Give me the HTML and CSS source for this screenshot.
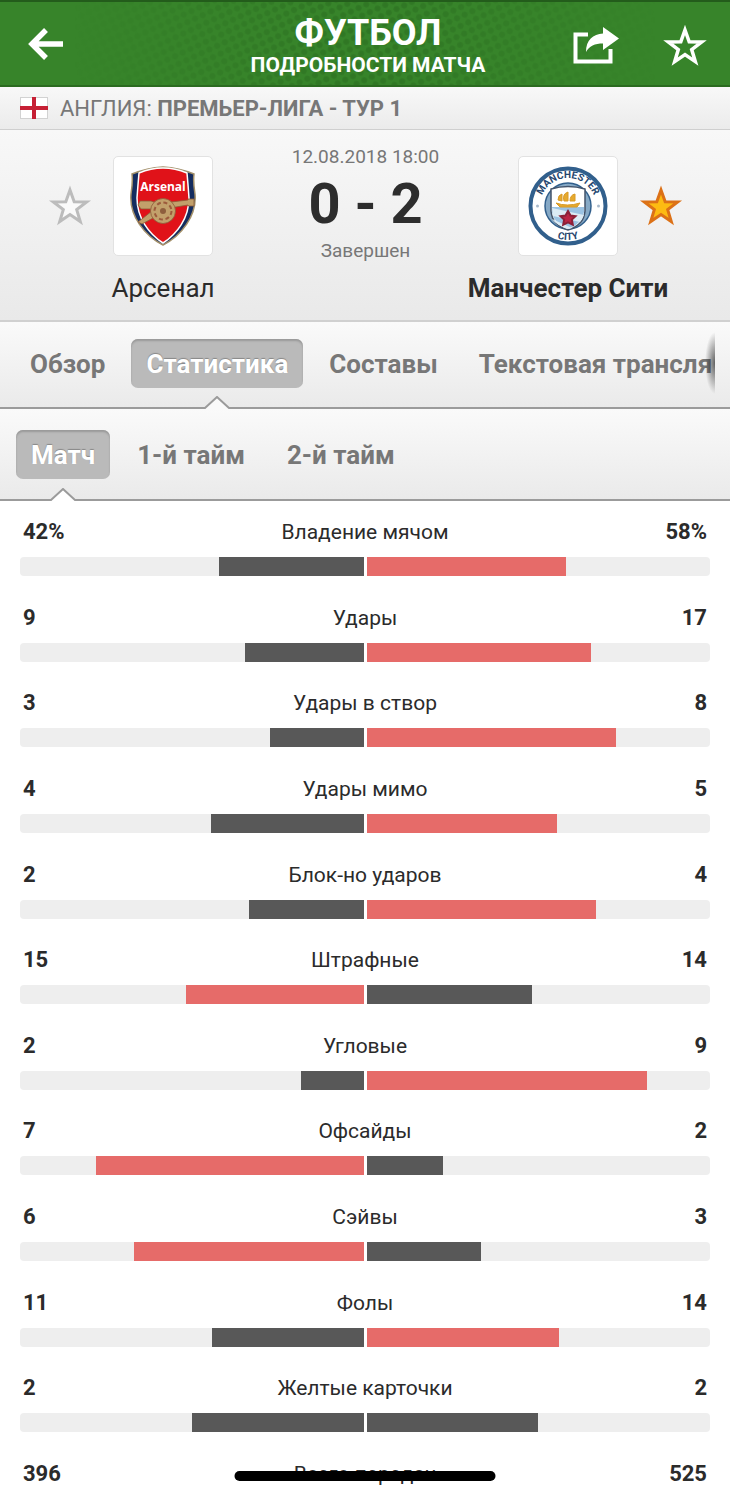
FILE: index.html
```
<!DOCTYPE html>
<html lang="ru">
<head>
    <meta charset="UTF-8">
    <meta name="viewport" content="width=device-width, initial-scale=1.0">
    <title>Футбол - Подробности матча</title>
    <link rel="stylesheet" href="styles.css">
</head>
<body>
    <header class="header">
        <svg class="header-pattern" aria-hidden="true">
            <defs>
                <pattern id="dots" width="12" height="12" patternUnits="userSpaceOnUse" patternTransform="rotate(20)">
                    <circle cx="3" cy="3" r="3"/>
                    <circle cx="9" cy="9" r="3"/>
                </pattern>
            </defs>
            <rect width="100%" height="100%" fill="url(#dots)"/>
        </svg>
        <div class="header-side">
            <button class="icon-button" aria-label="Назад">
                <svg width="36" height="34" viewBox="0 0 36 34"><path d="M35 17H6M18 3L4 17l14 14" fill="none" stroke="#fff" stroke-width="5.5"/></svg>
            </button>
        </div>
        <div class="header-title">
            <h1>ФУТБОЛ</h1>
            <p>ПОДРОБНОСТИ МАТЧА</p>
        </div>
        <div class="header-side header-actions">
            <button class="icon-button" aria-label="Поделиться">
                <svg width="46" height="38" viewBox="0 0 46 38">
                    <path d="M15 7.500H2.500V34.500H37.500V22" fill="none" stroke="#fff" stroke-width="4"/>
                    <path d="M30 0L46 11.500 30 23V16.500C22 16.500 16 19 13 25 13 13 20 7 30 6.500Z" fill="#fff"/>
                </svg>
            </button>
            <button class="icon-button" aria-label="В избранное">
                <svg width="46" height="44" viewBox="0 0 46 44"><path d="M23 6l4.200 11.800 12.500.200-10 7.600 3.600 12L23 30.600l-10.300 7 3.600-12-10-7.600 12.500-.2z" fill="none" stroke="#fff" stroke-width="3.500" stroke-miterlimit="8"/></svg>
            </button>
        </div>
    </header>

    <div class="league">
        <svg class="flag" width="28" height="22" viewBox="0 0 28 22">
            <rect x=".5" y=".5" width="27" height="21" fill="#fff" stroke="#d2d2d2"/>
            <path d="M14 0v22M0 11h28" stroke="#c62035" stroke-width="4"/>
        </svg>
        <span>АНГЛИЯ: <b>ПРЕМЬЕР-ЛИГА - ТУР 1</b></span>
    </div>

    <section class="match">
        <button class="icon-button team-star" aria-label="Арсенал в избранное">
            <svg width="46" height="44" viewBox="0 0 46 44"><path d="M23 6l4.200 11.800 12.500.200-10 7.600 3.600 12L23 30.600l-10.300 7 3.600-12-10-7.600 12.500-.2z" fill="#fafafa" stroke="#bcbcbc" stroke-width="3" stroke-miterlimit="8"/></svg>
        </button>
        <div class="team">
            <div class="crest">
                <svg width="68" height="80" viewBox="0 0 68 80">
                    <path d="M3 8Q18 2 34 1 50 2 65 8 64 16 66 28C68 50 52 70 34 79 16 70 0 50 2 28 4 16 3 8 3 8Z" fill="#142c5f" stroke="#a3906a" stroke-width="1.500"/>
                    <path d="M10 7Q22 2 34 2 46 2 58 7 59 18 60 32C60 52 48 68 34 77 20 68 8 52 8 32 9 18 10 7 10 7Z" fill="#e01219" stroke="#fff" stroke-width="1.500"/>
                    <text x="34" y="25" class="arsenal-text">Arsenal</text>
                    <g fill="#c2a06b" stroke="#8c5a38" stroke-width=".8">
                        <path d="M11 35h11l3 1q8-4 17 0l17-2v-1h6v7h-6v-1l-18 3-16 1H12l-3-4z"/>
                        <path d="M23 45L9 56l4 2 13-7z"/>
                        <circle cx="34" cy="45" r="12.500"/>
                    </g>
                    <circle cx="34" cy="45" r="8.500" fill="none" stroke="#9c5a3c" stroke-width="2" stroke-dasharray="4 2.700"/>
                    <circle cx="34" cy="45" r="3" fill="#8e5e3d"/>
                </svg>
            </div>
            <h2>Арсенал</h2>
        </div>
        <div class="result">
            <time datetime="2018-08-12T18:00">12.08.2018 18:00</time>
            <strong>0 - 2</strong>
            <span>Завершен</span>
        </div>
        <div class="team winner">
            <div class="crest">
                <svg width="80" height="80" viewBox="0 0 80 80">
                    <defs>
                        <path id="arcTop" d="M12 40a28 28 0 0 1 56 0"/>
                        <path id="arcBottom" d="M6 40a34 34 0 0 0 68 0"/>
                    </defs>
                    <circle cx="40" cy="40" r="37.500" fill="#fff" stroke="#315f8c" stroke-width="4"/>
                    <circle cx="40" cy="40" r="23" fill="#86a9c6" stroke="#315f8c" stroke-width="1.500"/>
                    <path d="M23 23q17-5 34 0v22q-1 14-17 19-16-5-17-19z" fill="#fff" stroke="#43536a" stroke-width="1.500"/>
                    <path d="M24 41h32v5q-2 12-16 17-14-5-16-17z" fill="#9cc3e3"/>
                    <path d="M24 42l32 7q-2 5-4 7L25 50zM24 53l20 9-4 1q-12-4-16-10z" fill="#dcebf5"/>
                    <path d="M28 37q11 4 24 0l-3 4H32zM30 34q0-5 4-6v7zM36 35q-2-7 4-9v9zM42 35q0-6 5-7v7z" fill="#e6a92e" stroke="#d99a25"/>
                    <path d="M40 45l2.500 4.500 5 .7-3.600 3.400.9 5.200L40 56.300l-4.800 2.500.9-5.200-3.600-3.400 5-.7z" fill="#ba2444" stroke="#8c2038" stroke-width="2"/>
                    <circle cx="9.500" cy="40" r="1.500" fill="#a9bacb"/>
                    <circle cx="70.500" cy="40" r="1.500" fill="#a9bacb"/>
                    <text class="city-text"><textPath href="#arcTop" startOffset="50%">MANCHESTER</textPath></text>
                    <text class="city-text"><textPath href="#arcBottom" startOffset="50%">CITY</textPath></text>
                </svg>
            </div>
            <h2>Манчестер Сити</h2>
        </div>
        <button class="icon-button team-star" aria-label="Манчестер Сити в избранном">
            <svg width="46" height="44" viewBox="0 0 46 44"><path d="M23 6l4.200 11.800 12.500.200-10 7.600 3.600 12L23 30.600l-10.300 7 3.600-12-10-7.600 12.500-.2z" fill="#fdbb12" stroke="#dc7117" stroke-width="3" stroke-miterlimit="8"/></svg>
        </button>
    </section>

    <nav class="tabs">
        <div class="tabs-scroll">
            <button class="tab">Обзор</button>
            <button class="tab active">Статистика<svg class="notch" width="32" height="14" viewBox="0 0 32 14"><path d="M1 14L4 12 16 1 28 12 31 14Z" fill="#fafafa"/><path d="M0 12H4L16 1 28 12H32" fill="none" stroke="#9b9b9b" stroke-width="2"/></svg></button>
            <button class="tab">Составы</button>
            <button class="tab">Текстовая трансля</button>
        </div>
    </nav>

    <nav class="tabs periods">
        <button class="tab active">Матч<svg class="notch" width="32" height="14" viewBox="0 0 32 14"><path d="M1 14L4 12 16 1 28 12 31 14Z" fill="#fff"/><path d="M0 12H4L16 1 28 12H32" fill="none" stroke="#9b9b9b" stroke-width="2"/></svg></button>
        <button class="tab">1-й тайм</button>
        <button class="tab">2-й тайм</button>
    </nav>

    <main class="stats">
        <div class="stat">
            <b>42%</b><span>Владение мячом</span><b>58%</b>
            <div class="bars"><div class="bar"><i style="width: 42%"></i></div><div class="bar"><i class="lead" style="width: 58%"></i></div></div>
        </div>
        <div class="stat">
            <b>9</b><span>Удары</span><b>17</b>
            <div class="bars"><div class="bar"><i style="width: 34.6%"></i></div><div class="bar"><i class="lead" style="width: 65.4%"></i></div></div>
        </div>
        <div class="stat">
            <b>3</b><span>Удары в створ</span><b>8</b>
            <div class="bars"><div class="bar"><i style="width: 27.3%"></i></div><div class="bar"><i class="lead" style="width: 72.7%"></i></div></div>
        </div>
        <div class="stat">
            <b>4</b><span>Удары мимо</span><b>5</b>
            <div class="bars"><div class="bar"><i style="width: 44.4%"></i></div><div class="bar"><i class="lead" style="width: 55.6%"></i></div></div>
        </div>
        <div class="stat">
            <b>2</b><span>Блок-но ударов</span><b>4</b>
            <div class="bars"><div class="bar"><i style="width: 33.3%"></i></div><div class="bar"><i class="lead" style="width: 66.7%"></i></div></div>
        </div>
        <div class="stat">
            <b>15</b><span>Штрафные</span><b>14</b>
            <div class="bars"><div class="bar"><i class="lead" style="width: 51.7%"></i></div><div class="bar"><i style="width: 48.3%"></i></div></div>
        </div>
        <div class="stat">
            <b>2</b><span>Угловые</span><b>9</b>
            <div class="bars"><div class="bar"><i style="width: 18.2%"></i></div><div class="bar"><i class="lead" style="width: 81.8%"></i></div></div>
        </div>
        <div class="stat">
            <b>7</b><span>Офсайды</span><b>2</b>
            <div class="bars"><div class="bar"><i class="lead" style="width: 77.8%"></i></div><div class="bar"><i style="width: 22.2%"></i></div></div>
        </div>
        <div class="stat">
            <b>6</b><span>Сэйвы</span><b>3</b>
            <div class="bars"><div class="bar"><i class="lead" style="width: 66.7%"></i></div><div class="bar"><i style="width: 33.3%"></i></div></div>
        </div>
        <div class="stat">
            <b>11</b><span>Фолы</span><b>14</b>
            <div class="bars"><div class="bar"><i style="width: 44%"></i></div><div class="bar"><i class="lead" style="width: 56%"></i></div></div>
        </div>
        <div class="stat">
            <b>2</b><span>Желтые карточки</span><b>2</b>
            <div class="bars"><div class="bar"><i style="width: 50%"></i></div><div class="bar"><i style="width: 50%"></i></div></div>
        </div>
        <div class="stat">
            <b>396</b><span>Всего передач</span><b>525</b>
        </div>
    </main>

    <div class="home-indicator"></div>
</body>
</html>
```
FILE: styles.css
```
* {
    box-sizing: border-box;
}

body {
    display: flex;
    flex-direction: column;
    min-height: 100vh;
    margin: 0;
    background-color: #fff;
    color: #2b2b2b;
    font-family: Roboto, "Liberation Sans", sans-serif;
}

h1, h2, p {
    margin: 0;
}

button {
    border: none;
    background: none;
    padding: 0;
    font-family: inherit;
    cursor: pointer;
}

svg {
    display: block;
}

/* Header */
.header {
    position: relative;
    display: grid;
    grid-template-columns: 1fr auto 1fr;
    align-items: center;
    height: 87px;
    padding: 4px 22px 0 28px;
    background-color: #37842a;
    border-top: 2px solid #235c1b;
    border-bottom: 2px solid #2b6b20;
    color: #fff;
}

.header-pattern {
    position: absolute;
    left: 0;
    top: 0;
    width: 100%;
    height: 100%;
    fill: #2a6c20;
    opacity: 0.5;
    -webkit-mask-image: linear-gradient(90deg, transparent 10%, #000 45%, #000 55%, transparent 90%);
    mask-image: linear-gradient(90deg, transparent 10%, #000 45%, #000 55%, transparent 90%);
}

.header-side, .header-title {
    position: relative;
}

.header-title {
    padding-top: 2px;
    text-align: center;
}

.header-title h1 {
    font-size: 36px;
    line-height: 36px;
}

.header-title p {
    font-size: 21px;
    line-height: 28px;
    font-weight: bold;
}

.header-actions {
    display: flex;
    justify-content: flex-end;
    align-items: center;
    gap: 43px;
}

/* League */
.league {
    display: flex;
    align-items: center;
    gap: 12px;
    height: 43px;
    padding: 0 20px;
    background: linear-gradient(#f8f8f8, #ebebeb);
    border-bottom: 1px solid #cfcfcf;
    color: #777;
    font-size: 22px;
}

/* Match */
.match {
    display: grid;
    grid-template-columns: 44px 142px 1fr 142px 44px;
    justify-items: center;
    padding: 26px 47px 16px 48px;
    background: linear-gradient(#f8f8f8, #e9e9e9);
}

.team-star {
    height: 100px;
}

.team {
    display: flex;
    flex-direction: column;
    align-items: center;
    gap: 16px;
}

.crest {
    display: flex;
    align-items: center;
    justify-content: center;
    width: 100px;
    height: 100px;
    background-color: #fff;
    border: 1px solid #e2e2e2;
    border-radius: 5px;
}

.team h2 {
    font-size: 26px;
    line-height: 32px;
    font-weight: normal;
    white-space: nowrap;
}

.team.winner h2 {
    font-weight: bold;
}

.arsenal-text {
    fill: #fff;
    font: bold 12px "Open Sans", sans-serif;
    text-anchor: middle;
}

.city-text {
    fill: #26466e;
    font: bold 10px Roboto, sans-serif;
    text-anchor: middle;
}

.result {
    display: flex;
    flex-direction: column;
    align-items: center;
    margin-top: -11px;
    color: #777;
    font-size: 19px;
    line-height: 24px;
}

.result strong {
    color: #2d2d2d;
    font-size: 56px;
    line-height: 70px;
}

/* Tabs */
.tabs {
    display: flex;
    padding: 0 15px;
    background: linear-gradient(#fafafa, #eaeaea);
    border-top: 2px solid #d0d0d0;
    border-bottom: 2px solid #9b9b9b;
}

.tabs-scroll {
    position: relative;
    display: flex;
    flex: 1;
    gap: 11px;
    min-width: 0;
    margin-bottom: -2px;
    padding-bottom: 2px;
    overflow: hidden;
}

/* shadow where the tabs run on */
.tabs-scroll::after {
    content: "";
    position: absolute;
    right: 0;
    top: 10px;
    width: 10px;
    height: 62px;
    background: radial-gradient(ellipse 10px 31px at 100% 50%, rgba(0, 0, 0, 0.6), transparent);
}

.tab {
    position: relative;
    flex: none;
    height: 49px;
    margin: 17px 0 19px;
    padding: 0 15px;
    border-radius: 7px;
    color: #777;
    font-size: 26px;
    font-weight: bold;
    white-space: nowrap;
}

.tab.active {
    background-color: #bababa;
    box-shadow: inset 0 2px 2px #999;
    color: #fff;
    text-shadow: 0 -1px 1px #888;
}

.tabs-scroll .tab:last-child {
    padding-right: 0;
}

.notch {
    position: absolute;
    left: 50%;
    bottom: -22px;
    margin-left: -16px;
}

.periods {
    gap: 12px;
    padding-left: 16px;
    border-top: none;
}

.periods .tab {
    margin: 21px 0 20px;
}

.periods .notch {
    bottom: -23px;
}

/* Stats */
.stats {
    display: flex;
    flex: 1;
    flex-direction: column;
    justify-content: space-between;
    gap: 24px;
    padding: 17px 20px 8px;
}

.stat {
    display: grid;
    grid-template-columns: 1fr auto 1fr;
    row-gap: 11px;
    font-size: 21px;
    line-height: 28px;
}

.stat b {
    padding: 0 3px;
    font-size: 22px;
}

.stat b:last-of-type {
    text-align: right;
}

.bars {
    grid-column: 1 / -1;
    display: flex;
    gap: 3px;
}

.bar {
    display: flex;
    flex: 1;
    height: 19px;
    background-color: #eee;
    border-radius: 0 4px 4px 0;
}

.bar:first-child {
    justify-content: flex-end;
    border-radius: 4px 0 0 4px;
}

.bar i {
    background-color: #585858;
}

.bar .lead {
    background-color: #e66b69;
}

.home-indicator {
    position: fixed;
    left: 50%;
    bottom: 15px;
    width: 261px;
    height: 10px;
    border-radius: 5px;
    background-color: #000;
    transform: translateX(-50%);
}
```
